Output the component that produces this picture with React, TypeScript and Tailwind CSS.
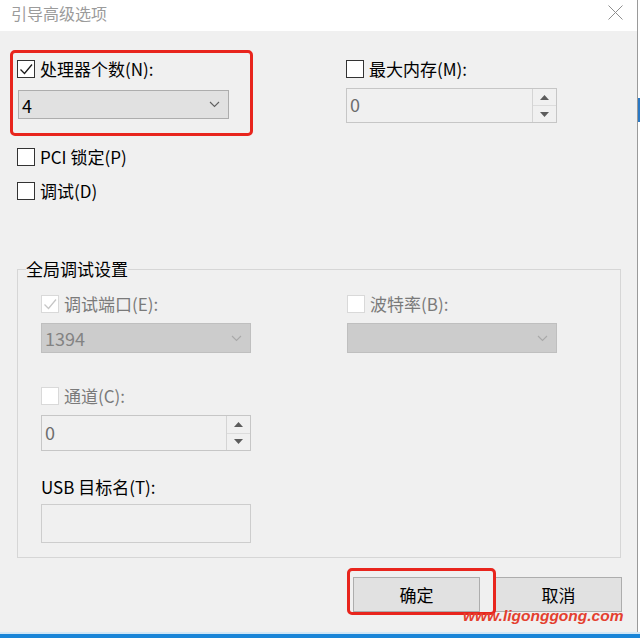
import React from "react";

function Box({ checked = false, disabled = false }: { checked?: boolean; disabled?: boolean }) {
  return (
    <span
      className={
        disabled
          ? "w-[18px] h-[18px] shrink-0 border border-[#d9d9d9] bg-white flex items-center justify-center"
          : "w-[18px] h-[18px] shrink-0 border border-[#333333] bg-white flex items-center justify-center"
      }
    >
      {checked && (
        <svg width="16" height="16" viewBox="0 0 16 16">
          <path d="M2.5 8.5L6.5 12.5L14 3.5" fill="none" stroke={disabled ? "#c6c6c6" : "#1a1a1a"} strokeWidth="1.3" />
        </svg>
      )}
    </span>
  );
}

function Chevron({ color }: { color: string }) {
  return (
    <svg width="11" height="7" viewBox="0 0 11 7">
      <path d="M1 1L5.5 5.5L10 1" fill="none" stroke={color} strokeWidth="1.1" />
    </svg>
  );
}

function SpinButtons({ h }: { h: string }) {
  return (
    <div className={`w-[24px] ${h} border-l border-[#d4d4d4] flex flex-col`}>
      <div className="flex-1 flex items-center justify-center border-b border-[#dcdcdc]">
        <svg width="9" height="5" viewBox="0 0 9 5">
          <path d="M0 5L4.5 0L9 5Z" fill="#5c5c5c" />
        </svg>
      </div>
      <div className="flex-1 flex items-center justify-center">
        <svg width="9" height="5" viewBox="0 0 9 5">
          <path d="M0 0L4.5 5L9 0Z" fill="#5c5c5c" />
        </svg>
      </div>
    </div>
  );
}

export default function App() {
  return (
    <div className="w-[640px] h-[638px] flex flex-col bg-white overflow-hidden font-['Noto_Sans_CJK_SC',sans-serif]">
      <div className="flex-1 flex min-h-0">
        <div className="w-[637px] flex flex-col">
          {/* title bar */}
          <div className="h-[31px] shrink-0 bg-white flex items-start justify-between pl-[11px] pr-[14px] pt-[1px]">
            <span className="text-[16px] leading-[24px] text-[#9b9b9b]">引导高级选项</span>
            <svg className="mt-[4px]" width="15" height="15" viewBox="0 0 15 15">
              <path d="M0.5 0.5L14.5 14.5M14.5 0.5L0.5 14.5" stroke="#8e8e8e" strokeWidth="1" />
            </svg>
          </div>

          {/* body */}
          <div className="flex-1 bg-[#f0f0f0] relative pl-[10px] flex flex-col text-[17px] leading-[24px] text-black">
            {/* top section */}
            <div className="mt-[19px] flex items-start">
              <div className="w-[243px] h-[86px] border-[3px] border-[#e8251d] rounded-[5px] pt-[7px] pl-[4px] flex flex-col">
                <div className="flex items-center gap-[5px] h-[18px]">
                  <Box checked />
                  <span>处理器个数(N):</span>
                </div>
                <div className="mt-[12px] ml-[1px] w-[211px] h-[29px] bg-[#e1e1e1] border border-[#adadad] flex items-center justify-between pl-[3px] pr-[8px]">
                  <span className="text-[18px]">4</span>
                  <Chevron color="#606060" />
                </div>
              </div>
              <div className="ml-[93px] pt-[10px] flex flex-col">
                <div className="flex items-center gap-[5px] h-[18px]">
                  <Box />
                  <span>最大内存(M):</span>
                </div>
                <div className="mt-[10px] w-[211px] h-[35px] border border-[#c6c6c6] bg-[#f0f0f0] flex">
                  <div className="flex-1 flex items-center pl-[3px] pb-[3px] text-[18px] text-[#6d6d6d]">0</div>
                  <SpinButtons h="h-[33px]" />
                </div>
              </div>
            </div>

            <div className="mt-[12px] ml-[7px] flex items-center gap-[5px] h-[18px]">
              <Box />
              <span>PCI 锁定(P)</span>
            </div>
            <div className="mt-[16px] ml-[7px] flex items-center gap-[5px] h-[18px]">
              <Box />
              <span>调试(D)</span>
            </div>

            {/* group */}
            <fieldset className="mt-[57px] ml-[7px] w-[604px] border border-[#d6d6d6] pb-[14px]">
              <legend className="ml-[8px] leading-[24px]">全局调试设置</legend>
              <div className="flex items-start mt-[14px] pl-[23px]">
                <div className="w-[210px] flex flex-col">
                  <div className="flex items-center gap-[5px] h-[18px]">
                    <Box checked disabled />
                    <span className="text-[#7a7a7a]">调试端口(E):</span>
                  </div>
                  <div className="mt-[10px] h-[30px] bg-[#cccccc] border border-[#bfbfbf] flex items-center justify-between pl-[3px] pr-[8px]">
                    <span className="text-[18px] text-[#838383]">1394</span>
                    <Chevron color="#a9a9a9" />
                  </div>
                  <div className="mt-[34px] flex items-center gap-[5px] h-[18px]">
                    <Box disabled />
                    <span className="text-[#7a7a7a]">通道(C):</span>
                  </div>
                  <div className="mt-[10px] h-[36px] border border-[#c6c6c6] bg-[#f0f0f0] flex">
                    <div className="flex-1 flex items-center pl-[3px] pb-[3px] text-[18px] text-[#6d6d6d]">0</div>
                    <SpinButtons h="h-[34px]" />
                  </div>
                  <div className="mt-[24px]">USB 目标名(T):</div>
                  <div className="mt-[5px] h-[39px] border border-[#cdcdcd] bg-[#f0f0f0]" />
                </div>
                <div className="ml-[96px] w-[210px] flex flex-col">
                  <div className="flex items-center gap-[5px] h-[18px]">
                    <Box disabled />
                    <span className="text-[#7a7a7a]">波特率(B):</span>
                  </div>
                  <div className="mt-[10px] h-[30px] bg-[#cccccc] border border-[#bfbfbf] flex items-center justify-end pr-[8px]">
                    <Chevron color="#a9a9a9" />
                  </div>
                </div>
              </div>
            </fieldset>

            {/* buttons */}
            <div className="mt-[19px] flex justify-end gap-[15px] pr-[15px]">
              <div className="relative">
                <button className="w-[127px] h-[35px] bg-[#e1e1e1] border border-[#adadad] text-[17px] leading-[24px]">确定</button>
                <div className="absolute left-[-6px] top-[-9px] w-[149px] h-[47px] border-[3px] border-[#e8251d] rounded-[5px]" />
              </div>
              <button className="w-[127px] h-[35px] bg-[#e1e1e1] border border-[#adadad] text-[17px] leading-[24px]">取消</button>
            </div>

            {/* watermark */}
            <div className="absolute left-[463px] top-[575px] text-[15.5px] leading-[20px] font-bold italic font-['Liberation_Sans',sans-serif] text-[#e4402f]">
              www.ligonggong.com
            </div>
          </div>
        </div>
        <div className="w-[1px] bg-[#9a9a9a]" />
        <div className="w-[2px] bg-white flex flex-col">
          <div className="h-[98px]" />
          <div className="h-[24px] bg-[#2a78c4]" />
        </div>
      </div>
      <div className="h-[2px] bg-[#d2e7f6]" />
      <div className="h-[4px] bg-[#1985d8]" />
    </div>
  );
}
